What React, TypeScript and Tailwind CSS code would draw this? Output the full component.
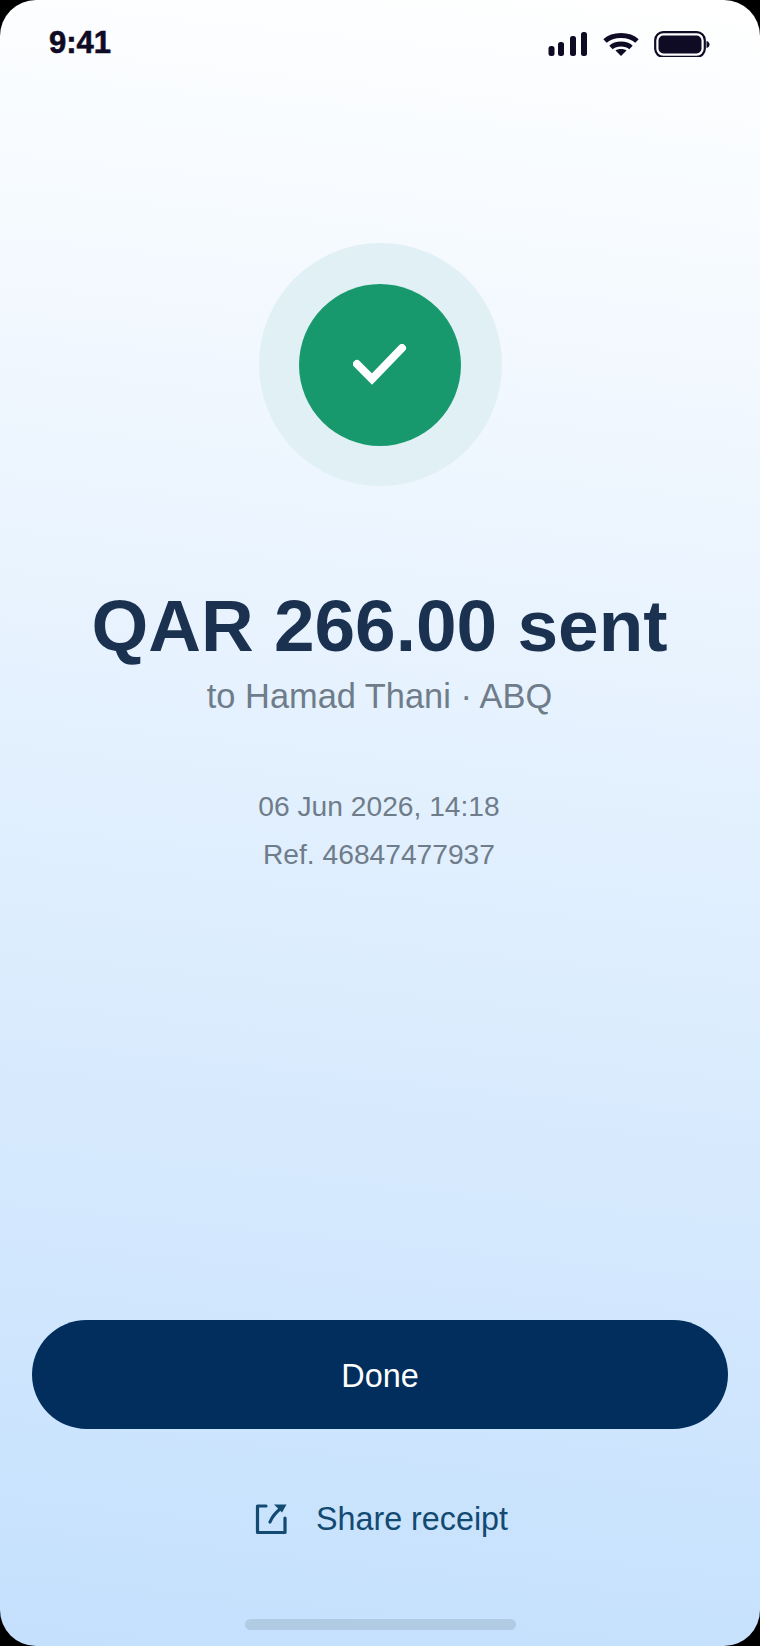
const font = "font-['Liberation_Sans',Arial,sans-serif]";

function StatusIcons() {
  return (
    <div className="flex items-start">
      <svg width="40" height="26" viewBox="0 0 40 26" fill="#100b24">
        <rect x="0.500" y="15" width="6" height="10" rx="2.500" />
        <rect x="10" y="11" width="6" height="14" rx="2.500" />
        <rect x="22" y="5" width="6" height="20" rx="2.500" />
        <rect x="33" y="1" width="6" height="24" rx="2.500" />
      </svg>
      <svg width="36" height="26" viewBox="0 0 36 26" fill="none" stroke="#100b24" strokeWidth="5" className="ml-[15px]">
        <path d="M2 10 C10 2.500 26 2.500 34 10" />
        <path d="M8 16.500 C13 11.800 23 11.800 28 16.500" />
        <path d="M18 25 L12.500 19.500 C15 17.500 21 17.500 23.500 19.500 Z" fill="#100b24" stroke="none" />
      </svg>
      <svg width="56" height="26" viewBox="0 0 56 26" className="ml-[15px]">
        <rect x="1.200" y="1.200" width="49.600" height="24.600" rx="8" fill="none" stroke="#100b24" strokeWidth="2.200" />
        <rect x="4.500" y="4.500" width="43" height="18" rx="5" fill="#100b24" />
        <path d="M52.500 10 C54.500 10.500 55.500 12 55.500 13.500 C55.500 15 54.500 16.500 52.500 17 Z" fill="#100b24" />
      </svg>
    </div>
  );
}

export default function App() {
  return (
    <div className={`h-[1646px] w-[760px] bg-black ${font}`}>
      <div className="flex h-full flex-col items-center overflow-hidden rounded-[36px] bg-linear-[186deg] from-white to-[#c4e0fd]">
        <div className="flex h-[86px] w-full items-start justify-between pl-[49px] pr-[50px] pt-[26px]">
          <span className="text-[31px] leading-[34px] font-bold text-[#100b24] [-webkit-text-stroke:0.6px_#100b24]">9:41</span>
          <div className="pt-[5px]">
            <StatusIcons />
          </div>
        </div>

        <div className="mt-[157px] flex h-[243px] w-[243px] items-center justify-center rounded-full bg-[#e1f0f5]">
          <div className="flex h-[162px] w-[162px] items-center justify-center rounded-full bg-[#17996d]">
            <svg width="54" height="42" viewBox="0 0 54 42" fill="none" stroke="#fff" strokeWidth="8" strokeLinecap="round">
              <path d="M4 20 L19 35 L49 4" />
            </svg>
          </div>
        </div>

        <h1 className="mt-[101px] pr-[1px] text-[73px] leading-[78px] font-bold text-[#1b3150]">QAR 266.00 sent</h1>
        <p className="mt-[11px] pr-[1px] text-[34.400px] leading-[40px] text-[#6f7c8a]">to Hamad Thani · ABQ</p>
        <p className="mt-[66px] pr-[2px] text-[28.200px] leading-[48px] text-[#6f7c8a]">06 Jun 2026, 14:18</p>
        <p className="pr-[2px] text-[28.200px] leading-[48px] text-[#6f7c8a]">Ref. 46847477937</p>

        <div className="mt-auto flex w-full flex-col items-center px-[32px]">
          <button className="h-[109px] w-full rounded-full bg-[#012e5c] pt-[3px] text-[32.400px] text-white">Done</button>
          <div className="mt-[70px] flex items-center gap-[29px] pl-[3px] text-[#124a72]">
            <svg width="32" height="32" viewBox="0 0 32 32" fill="none" stroke="currentColor" strokeWidth="3.200" strokeLinecap="round" strokeLinejoin="round">
              <path d="M11 3 H2.500 V29.500 H30 V15" />
              <path d="M15 19 C17 14 21 9 27 4.500" />
              <path d="M19 1.500 H31.500 L27 9.500 Z" fill="currentColor" stroke="none" />
            </svg>
            <span className="text-[32.300px] leading-[40px]">Share receipt</span>
          </div>
          <div className="mt-[80px] mb-[16px] h-[11px] w-[271px] rounded-full bg-[#b1cbe5]" />
        </div>
      </div>
    </div>
  );
}
